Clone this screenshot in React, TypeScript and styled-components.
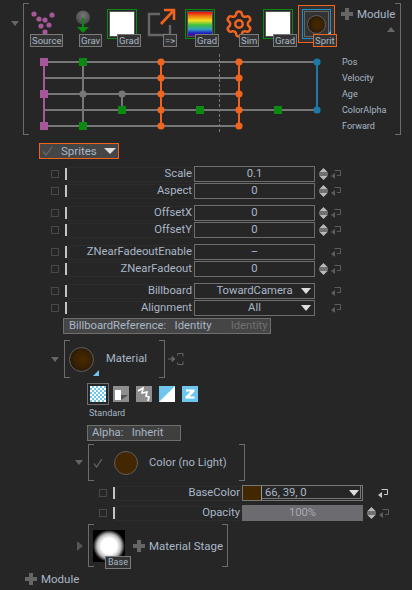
import React from "react";
import styled, { createGlobalStyle } from "styled-components";
import { Settings } from "lucide-react";

const textColor = "#a9b7c6";
const lineColor = "#777";
const orange = "#f0641e";

const GlobalStyle = createGlobalStyle`
  html, body { margin: 0; padding: 0; background: #262626; }
  * { box-sizing: border-box; }
`;

const Page = styled.div`
  width: 412px;
  height: 590px;
  overflow: hidden;
  background: #262626;
  color: ${textColor};
  font-family: Roboto, "Noto Sans", "Liberation Sans", sans-serif;
  font-size: 11px;
  line-height: 14px;
`;

const Bracket = styled.div<{ $width: number; $height: number }>`
  position: relative;
  width: ${(p) => p.$width}px;
  height: ${(p) => p.$height}px;
  flex: none;
  &::before,
  &::after {
    content: "";
    position: absolute;
    top: 0;
    bottom: 0;
    width: 5px;
    border: 1px solid #6c6c6c;
  }
  &::before { left: 0; border-right: 0; }
  &::after { right: 0; border-left: 0; }
`;

const Triangle = styled.div<{ $dir?: "down" | "up" | "right" }>`
  flex: none;
  width: 0;
  height: 0;
  ${(p) =>
    p.$dir === "right"
      ? `border-left: 6px solid #555; border-top: 5px solid transparent; border-bottom: 5px solid transparent;`
      : p.$dir === "up"
        ? `border-bottom: 5px solid #666; border-left: 4px solid transparent; border-right: 4px solid transparent;`
        : `border-top: 5px solid #666; border-left: 4px solid transparent; border-right: 4px solid transparent;`}
`;

const ModuleSection = styled.div`
  display: flex;
  padding: 3px 0 0 11px;
`;

const CollapseMark = styled(Triangle)`
  margin: 18px 4px 0 0;
`;

const IconRow = styled.div`
  display: flex;
  height: 51px;
  padding: 2px 0 0 7px;
`;

const Slot = styled.div<{ $width: number }>`
  position: relative;
  flex: none;
  width: ${(p) => p.$width}px;
  height: 42px;
`;

const Art = styled.svg<{ $top: number; $left?: number }>`
  display: block;
  margin: ${(p) => p.$top}px 0 0 ${(p) => p.$left ?? 0}px;
`;

const Badge = styled.span<{ $left: number; $active?: boolean }>`
  position: absolute;
  left: ${(p) => p.$left}px;
  top: 29px;
  height: 13px;
  padding: 0 1px;
  font-size: 9.5px;
  line-height: 11px;
  white-space: nowrap;
  background: #333;
  color: ${textColor};
  border: 1px solid ${(p) => (p.$active ? orange : "#7a7a7a")};
`;

const SwatchFrame = styled.div`
  margin-top: 4px;
  width: 30px;
  height: 30px;
  padding: 1px;
  border: 1px solid #0b8a12;
`;

const Swatch = styled.div<{ $rainbow?: boolean }>`
  width: 100%;
  height: 100%;
  border: 1px solid #555;
  background: ${(p) =>
    p.$rainbow
      ? "linear-gradient(#e01010 0%, #f08010 18%, #f0e020 36%, #40c040 54%, #30a0c0 72%, #2020c0 88%, #501090 100%)"
      : "#fff"};
`;

const SpriteFrame = styled.div`
  width: 37px;
  height: 38px;
  padding: 3px;
  background: #333;
  border: 1px solid ${orange};
`;

const SpriteInner = styled.div`
  position: relative;
  width: 100%;
  height: 100%;
  padding: 1px;
  border: 1px solid #1f8fc8;
  display: flex;
  align-items: center;
  justify-content: center;
`;

const SpriteBorder = styled.div`
  width: 100%;
  height: 100%;
  border: 1px solid #666;
  display: flex;
  align-items: center;
  justify-content: center;
`;

const Ball = styled.div<{ $size: number; $flat?: boolean }>`
  flex: none;
  width: ${(p) => p.$size}px;
  height: ${(p) => p.$size}px;
  border-radius: 50%;
  border: 1px solid #5e5e5e;
  background: ${(p) =>
    p.$flat ? "#422700" : "radial-gradient(circle at 55% 50%, #4a2a00 0%, #3a2204 45%, #151210 100%)"};
`;

const Corner = styled.span<{ $right: number; $bottom: number }>`
  position: absolute;
  right: ${(p) => p.$right}px;
  bottom: ${(p) => p.$bottom}px;
  width: 0;
  height: 0;
  border-bottom: 6px solid #6ec6ee;
  border-left: 6px solid transparent;
`;

const GearIcon = styled(Settings)`
  display: block;
  margin: 4px 0 0 -1px;
`;

const AddModule = styled.div`
  display: flex;
  align-items: center;
  gap: 4px;
  font-size: 11.5px;
  line-height: 14px;
  color: ${textColor};
`;

const TopAdd = styled.div`
  position: relative;
  padding-top: 2px;
`;

const UpMark = styled(Triangle)`
  position: absolute;
  left: 46px;
  top: 22px;
`;

const GraphRow = styled.div`
  display: flex;
  padding-left: 17px;
`;

const PortList = styled.div`
  display: flex;
  flex-direction: column;
  font-size: 9px;
  line-height: 16px;
`;

const SpritesHeader = styled.div`
  display: flex;
  align-items: center;
  width: 80px;
  height: 16px;
  margin: 8px 0 0 39px;
  padding: 0 2px;
  background: #454545;
  border: 1px solid ${orange};
  font-size: 11.5px;
`;

const HeaderCheck = styled.svg`
  flex: none;
  margin-right: 8px;
`;

const HeaderArrow = styled(Triangle)`
  margin-left: 7px;
  border-top-color: #ddd;
  border-top-width: 6px;
  border-left-width: 6px;
  border-right-width: 6px;
`;

const ParamGroup = styled.div<{ $gap: number }>`
  display: flex;
  flex-direction: column;
  gap: 1px;
  margin-top: ${(p) => p.$gap}px;
`;

const Row = styled.div<{ $indent: number }>`
  display: flex;
  align-items: center;
  height: 16px;
  padding-left: ${(p) => p.$indent}px;
`;

const CheckBox = styled.span`
  flex: none;
  width: 8px;
  height: 8px;
  margin-right: 6px;
  border: 1px solid #484848;
`;

const Bar = styled.span`
  flex: none;
  width: 2px;
  height: 12px;
  margin-right: 1px;
  background: #c4c4c4;
`;

const Label = styled.div`
  flex: none;
  width: 125px;
  height: 15px;
  margin-right: 1px;
  text-align: right;
  white-space: nowrap;
  border: 1px solid #2c2c2c;
  font-size: 11.25px;
  line-height: 12px;
`;

const ValueBox = styled.div`
  position: relative;
  flex: none;
  display: flex;
  align-items: center;
  justify-content: center;
  width: 121px;
  height: 16px;
  border: 1px solid #6e6e6e;
  font-size: 11.25px;
  white-space: nowrap;
  overflow: hidden;
`;

const DropArrow = styled(Triangle)`
  position: absolute;
  right: 3px;
  top: 4px;
  border-top-color: #ddd;
  border-top-width: 6px;
  border-left-width: 5px;
  border-right-width: 5px;
`;

const ColorBox = styled(ValueBox)`
  justify-content: flex-start;
  border-color: #777;
  box-shadow: inset -1px -1px 0 #262626, inset -2px -2px 0 #777;
`;

const ColorChip = styled.span`
  flex: none;
  width: 19px;
  height: 14px;
  margin-right: 3px;
  background: #422700;
  border-right: 1px solid #999;
`;

const PercentBar = styled(ValueBox)`
  background: #6b6b70;
  border: 0;
  color: #a8aab0;
`;

const SpinSlot = styled.span`
  flex: none;
  width: 12px;
  margin-left: 4px;
  display: flex;
`;

const ResetSlot = styled.span<{ $gap?: number }>`
  flex: none;
  display: flex;
  margin-left: ${(p) => p.$gap ?? 0}px;
`;

const RefBar = styled.div`
  display: flex;
  align-items: center;
  width: 208px;
  height: 16px;
  margin: 2px 0 0 63px;
  padding-left: 5px;
  background: #454545;
  border: 1px solid #6e6e6e;
  font-size: 11.25px;
  white-space: pre;
`;

const DimText = styled.span`
  margin-left: 19px;
  color: #707070;
`;

const FoldRow = styled.div<{ $indent: number; $top: number }>`
  display: flex;
  align-items: center;
  margin-top: ${(p) => p.$top}px;
  padding-left: ${(p) => p.$indent}px;
`;

const FoldMark = styled(Triangle)`
  margin-right: 5px;
`;

const SectionInner = styled.div`
  display: flex;
  align-items: center;
  height: 100%;
  font-size: 11.25px;
  white-space: nowrap;
`;

const MaterialInner = styled(SectionInner)`
  padding-left: 5px;
  gap: 12px;
`;

const ColorInner = styled(SectionInner)`
  padding-left: 5px;
  gap: 11px;
`;

const PlugIcon = styled.svg`
  margin-left: 3px;
`;

const ModeRow = styled.div`
  display: flex;
  align-items: center;
  gap: 7px;
  height: 22px;
  margin: 5px 0 0 87px;
  padding-left: 3px;
`;

const ModeIcon = styled.span<{ $selected?: boolean }>`
  position: relative;
  display: flex;
  flex: none;
  width: 16px;
  height: 16px;
  outline: ${(p) => (p.$selected ? "1px solid #6e6e6e" : "none")};
  outline-offset: 2px;
`;

const SmallCaption = styled.div`
  margin: 2px 0 0 89px;
  font-size: 9px;
  line-height: 13px;
`;

const AlphaBox = styled.div`
  display: flex;
  align-items: center;
  width: 94px;
  height: 16px;
  margin: 5px 0 0 87px;
  padding-left: 4px;
  background: #3f3f3f;
  border: 1px solid #6e6e6e;
  font-size: 11.25px;
  white-space: pre;
`;

const StageInner = styled(SectionInner)`
  position: relative;
  padding-left: 5px;
  gap: 8px;
`;

const BaseThumb = styled.div`
  position: relative;
  flex: none;
  width: 32px;
  height: 32px;
  background: radial-gradient(closest-side, #fff 0%, #fff 50%, #bbb 75%, #000 100%) #000;
`;

const BaseBadge = styled(Badge)`
  top: 26px;
  left: 12px;
  padding: 0 2px;
  font-size: 9px;
`;

const BottomAdd = styled(AddModule)`
  margin: 5px 0 0 25px;
`;

const ColorRows = styled(ParamGroup)`
  gap: 4px;
`;

const Plus = ({ size = 12 }: { size?: number }) => (
  <svg width={size} height={size} viewBox="0 0 12 12" style={{ flex: "none" }}>
    <path d="M4 0h4v4h4v4H8v4H4V8H0V4h4z" fill="#666" />
  </svg>
);

const Spinner = () => (
  <svg width="9" height="12" viewBox="0 0 9 12">
    <path d="M4.5 0 9 4.5H0zM0 5.5h9v1H0zM0 7.5h9L4.5 12z" fill="#b9b9b9" />
  </svg>
);

const Reset = ({ bright }: { bright?: boolean }) => (
  <svg width="10" height="9" viewBox="0 0 10 9">
    <path d="M3.5 .5H9.5V5.5H6" fill="none" stroke={bright ? "#c8c8c8" : "#5c5c5c"} strokeWidth="1" />
    <path d="M3.5 .5V2M0 6l4-3v6z" fill={bright ? "#c8c8c8" : "#5c5c5c"} />
  </svg>
);

const SourceIcon = () => (
  <Art $top={3} width="33" height="28" viewBox="30 8 33 28">
    {[[34, 14], [52, 15], [39, 19], [45, 20], [41, 26], [49, 25], [45, 32]].map(([x, y]) => (
      <circle key={`${x}-${y}`} cx={x} cy={y} r="2.6" fill="#a6579a" />
    ))}
  </Art>
);

const GravIcon = () => (
  <Art $top={2} $left={-3} width="20" height="30" viewBox="73 7 20 30">
    <defs>
      <radialGradient id="gravBall" cx="50%" cy="35%" r="65%">
        <stop offset="0%" stopColor="#777" />
        <stop offset="100%" stopColor="#444" />
      </radialGradient>
    </defs>
    <circle cx="83" cy="17.5" r="7" fill="url(#gravBall)" />
    <path d="M83 18v10" stroke="#0b8a12" strokeWidth="2" />
    <path d="M77 27h12l-6 6z" fill="#0b8a12" />
  </Art>
);

const ArrowIcon = () => (
  <Art $top={3} $left={-1} width="32" height="30" viewBox="147 8 32 30">
    <path d="M170 25v10h-21V14h11" fill="none" stroke="#666" strokeWidth="2.4" />
    <path d="M161 24 174 10M164 10h10v10" fill="none" stroke={orange} strokeWidth="2.6" />
  </Art>
);

const Graph = () => {
  const rails: [number, number][] = [[62, 317], [78, 239], [94, 239], [110, 317], [126, 239]];
  const square = (x: number, y: number, fill: string) => (
    <rect key={`s${x}-${y}`} x={x - 4} y={y - 4} width="8" height="8" fill={fill} />
  );
  const dot = (x: number, y: number, fill: string) => (
    <circle key={`d${x}-${y}`} cx={x} cy={y} r="3.6" fill={fill} />
  );
  const ys = [62, 78, 94, 110, 126];
  return (
    <svg width="302" height="80" viewBox="40 54 302 80" style={{ flex: "none" }}>
      {rails.map(([y, end]) => (
        <line key={y} x1="44" x2={end} y1={y} y2={y} stroke={lineColor} strokeWidth="2" />
      ))}
      <line x1="44" x2="44" y1="62" y2="126" stroke="#a6579a" strokeWidth="2" />
      <line x1="83" x2="83" y1="62" y2="126" stroke={lineColor} strokeWidth="2" />
      <line x1="122" x2="122" y1="94" y2="110" stroke={lineColor} strokeWidth="2" />
      <line x1="219.5" x2="219.5" y1="54" y2="133" stroke={lineColor} strokeWidth="1" strokeDasharray="3 2" />
      <line x1="161" x2="161" y1="62" y2="126" stroke={orange} strokeWidth="2" />
      <line x1="239" x2="239" y1="62" y2="126" stroke={orange} strokeWidth="2" />
      <line x1="317" x2="317" y1="62" y2="110" stroke="#1f78a8" strokeWidth="2" />
      {[62, 94, 126].map((y) => square(44, y, "#a6579a"))}
      {[62, 126].map((y) => square(83, y, "#0b8a12"))}
      {dot(83, 94, lineColor)}
      {dot(122, 94, lineColor)}
      {square(122, 110, "#0b8a12")}
      {square(200, 110, "#0b8a12")}
      {square(278, 110, "#0b8a12")}
      {ys.map((y) => dot(161, y, orange))}
      {ys.map((y) => dot(239, y, orange))}
      {dot(317, 62, "#1f78a8")}
      {dot(317, 110, "#1f78a8")}
    </svg>
  );
};

const Param = ({
  label,
  value,
  spin = true,
  drop,
}: {
  label: string;
  value: string;
  spin?: boolean;
  drop?: boolean;
}) => (
  <Row $indent={51}>
    <CheckBox />
    <Bar />
    <Label>{label}</Label>
    <ValueBox>
      {value}
      {drop && <DropArrow />}
    </ValueBox>
    <SpinSlot>{spin && <Spinner />}</SpinSlot>
    <ResetSlot>
      <Reset />
    </ResetSlot>
  </Row>
);

export default function App() {
  return (
    <Page>
      <GlobalStyle />
      <ModuleSection>
        <CollapseMark />
        <Bracket $width={378} $height={132}>
          <IconRow>
            <Slot $width={46}>
              <SourceIcon />
              <Badge $left={0}>Source</Badge>
            </Slot>
            <Slot $width={31}>
              <GravIcon />
              <Badge $left={3}>Grav</Badge>
            </Slot>
            <Slot $width={41}>
              <SwatchFrame>
                <Swatch />
              </SwatchFrame>
              <Badge $left={10}>Grad</Badge>
            </Slot>
            <Slot $width={37}>
              <ArrowIcon />
              <Badge $left={15}>{"=>"}</Badge>
            </Slot>
            <Slot $width={40}>
              <SwatchFrame>
                <Swatch $rainbow />
              </SwatchFrame>
              <Badge $left={10}>Grad</Badge>
            </Slot>
            <Slot $width={38}>
              <GearIcon size={30} color={orange} strokeWidth={2} />
              <Badge $left={14}>Sim</Badge>
            </Slot>
            <Slot $width={35}>
              <SwatchFrame>
                <Swatch />
              </SwatchFrame>
              <Badge $left={10}>Grad</Badge>
            </Slot>
            <Slot $width={43}>
              <SpriteFrame>
                <SpriteInner>
                  <SpriteBorder>
                    <Ball $size={19} />
                  </SpriteBorder>
                  <Corner $right={-1} $bottom={1} />
                </SpriteInner>
              </SpriteFrame>
              <Badge $left={15} $active>
                Sprit
              </Badge>
            </Slot>
            <TopAdd>
              <AddModule>
                <Plus />
                Module
              </AddModule>
              <UpMark $dir="up" />
            </TopAdd>
          </IconRow>
          <GraphRow>
            <Graph />
            <PortList>
              <span>Pos</span>
              <span>Velocity</span>
              <span>Age</span>
              <span>ColorAlpha</span>
              <span>Forward</span>
            </PortList>
          </GraphRow>
        </Bracket>
      </ModuleSection>

      <SpritesHeader>
        <HeaderCheck width="11" height="10" viewBox="0 0 11 10">
          <path d="M1 5.5 4 9l6-8" fill="none" stroke="#6a6a6a" strokeWidth="1.2" />
        </HeaderCheck>
        Sprites
        <HeaderArrow />
      </SpritesHeader>

      <ParamGroup $gap={7}>
        <Param label="Scale" value="0.1" />
        <Param label="Aspect" value="0" />
      </ParamGroup>
      <ParamGroup $gap={6}>
        <Param label="OffsetX" value="0" />
        <Param label="OffsetY" value="0" />
      </ParamGroup>
      <ParamGroup $gap={6}>
        <Param label="ZNearFadeoutEnable" value="–" spin={false} />
        <Param label="ZNearFadeout" value="0" />
      </ParamGroup>
      <ParamGroup $gap={6}>
        <Param label="Billboard" value="TowardCamera" spin={false} drop />
        <Param label="Alignment" value="All" spin={false} drop />
      </ParamGroup>
      <RefBar>
        BillboardReference:{"   "}Identity
        <DimText>Identity</DimText>
      </RefBar>

      <FoldRow $indent={51} $top={6}>
        <FoldMark />
        <Bracket $width={101} $height={38}>
          <MaterialInner>
            <Ball $size={25} />
            Material
          </MaterialInner>
          <Corner $right={66} $bottom={2} />
        </Bracket>
        <PlugIcon width="16" height="12" viewBox="0 0 16 12">
          <path d="M0 6h6M4 3.5 7 6 4 8.5z" stroke="#666" fill="#666" />
          <path d="M10 .5h5M10 11.5h5M15 .5v3M15 8.5v3M9.5 .5v2M9.5 9.5v2" stroke="#666" fill="none" />
        </PlugIcon>
      </FoldRow>

      <ModeRow>
        <ModeIcon $selected>
          <svg width="16" height="16" viewBox="0 0 16 16">
            <defs>
              <pattern id="checks" width="4" height="4" patternUnits="userSpaceOnUse">
                <rect width="4" height="4" fill="#6ec6ee" />
                <rect width="2" height="2" fill="#fff" />
                <rect x="2" y="2" width="2" height="2" fill="#fff" />
              </pattern>
            </defs>
            <rect width="16" height="16" fill="url(#checks)" />
          </svg>
        </ModeIcon>
        <ModeIcon>
          <svg width="16" height="16" viewBox="0 0 16 16">
            <rect width="16" height="16" fill="#8e8e8e" />
            <rect x="2" y="4" width="6" height="10" fill="#fff" />
            <path d="M8 9h7l-7 5z" fill="#555" />
          </svg>
        </ModeIcon>
        <ModeIcon>
          <svg width="16" height="16" viewBox="0 0 16 16">
            <rect width="16" height="16" fill="#8e8e8e" />
            <path d="M2 5 7 2l-1 5 5-1-1 4 3 1-1 4" fill="none" stroke="#fff" strokeWidth="1.6" />
          </svg>
        </ModeIcon>
        <ModeIcon>
          <svg width="16" height="16" viewBox="0 0 16 16">
            <rect width="16" height="16" fill="#6ec6ee" />
            <path d="M16 0v16H0z" fill="#fff" />
          </svg>
        </ModeIcon>
        <ModeIcon>
          <svg width="16" height="16" viewBox="0 0 16 16">
            <rect width="16" height="16" fill="#6ec6ee" />
            <path d="M4 3.5h8.5v2L7.5 10.5h5v2H3.5v-2l5-5H4z" fill="#fff" />
          </svg>
        </ModeIcon>
      </ModeRow>
      <SmallCaption>Standard</SmallCaption>
      <AlphaBox>
        Alpha:{"   "}Inherit
      </AlphaBox>

      <FoldRow $indent={75} $top={3}>
        <FoldMark />
        <Bracket $width={157} $height={37}>
          <ColorInner>
            <svg width="10" height="10" viewBox="0 0 10 10" style={{ flex: "none" }}>
              <path d="M1 5.5 3.5 9 9 1" fill="none" stroke="#6a6a6a" strokeWidth="1.2" />
            </svg>
            <Ball $size={24} $flat />
            Color (no Light)
          </ColorInner>
        </Bracket>
      </FoldRow>

      <ColorRows $gap={4}>
        <Row $indent={99}>
          <CheckBox />
          <Bar />
          <Label>BaseColor</Label>
          <ColorBox>
            <ColorChip />
            66, 39, 0
            <DropArrow />
          </ColorBox>
          <ResetSlot $gap={15}>
            <Reset bright />
          </ResetSlot>
        </Row>
        <Row $indent={99}>
          <CheckBox />
          <Bar />
          <Label>Opacity</Label>
          <PercentBar>100%</PercentBar>
          <SpinSlot>
            <Spinner />
          </SpinSlot>
          <ResetSlot>
            <Reset />
          </ResetSlot>
        </Row>
      </ColorRows>

      <FoldRow $indent={77} $top={3}>
        <FoldMark $dir="right" />
        <Bracket $width={140} $height={43}>
          <StageInner>
            <BaseThumb>
              <BaseBadge $left={12}>Base</BaseBadge>
            </BaseThumb>
            <AddModule>
              <Plus />
              Material Stage
            </AddModule>
          </StageInner>
        </Bracket>
      </FoldRow>

      <BottomAdd>
        <Plus />
        Module
      </BottomAdd>
    </Page>
  );
}
